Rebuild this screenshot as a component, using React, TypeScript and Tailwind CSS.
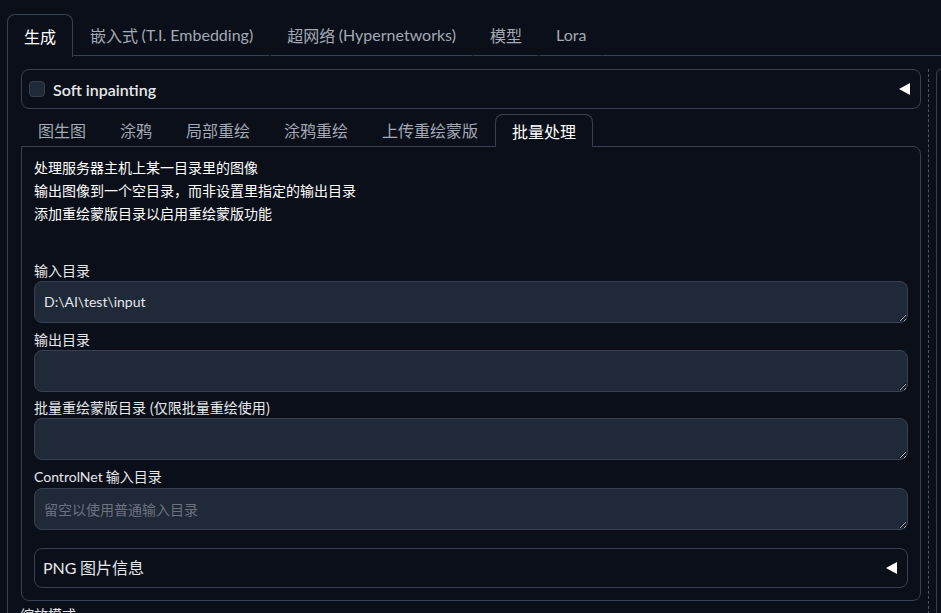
import React from 'react';

const latin = "font-['Lato','Noto_Sans_CJK_SC',sans-serif]";

const topTabs: { zh: string; en?: string }[] = [
  { zh: '生成' },
  { zh: '嵌入式 ', en: '(T.I. Embedding)' },
  { zh: '超网络 ', en: '(Hypernetworks)' },
  { zh: '模型' },
  { zh: '', en: 'Lora' },
];
const subTabs = ['图生图', '涂鸦', '局部重绘', '涂鸦重绘', '上传重绘蒙版', '批量处理'];

const fields = [
  { label: '输入目录', value: 'D:\\AI\\test\\input', placeholder: '' },
  { label: '输出目录', value: '', placeholder: '' },
  { label: '批量重绘蒙版目录 (仅限批量重绘使用)', value: '', placeholder: '' },
  { label: 'ControlNet 输入目录', value: '', placeholder: '留空以使用普通输入目录' },
];

const Caret: React.FC = () => (
  <svg width="11" height="12" viewBox="0 0 11 12" className="shrink-0">
    <path d="M0 6 L11 0 L11 12 Z" fill="#ffffff" />
  </svg>
);

const App: React.FC = () => {
  return (
    <div className="h-[613px] w-[941px] overflow-hidden bg-[#0b0f19] font-['Noto_Sans_CJK_SC','Noto_Sans',sans-serif] text-[#e5e7eb]">
      <div className="pl-[7px] pt-[14px]">
        {/* top tabs */}
        <div className="flex h-[42px]">
          {topTabs.map((t, i) =>
            i === 0 ? (
              <div
                key={t.zh}
                className="relative z-10 -mb-px flex h-[43px] items-center rounded-t-lg border border-b-0 border-[#374151] bg-[#0b0f19] px-4 text-[16px] text-white"
              >
                {t.zh}
              </div>
            ) : (
              <div
                key={t.zh + t.en}
                className="flex items-center whitespace-pre border-b border-[#374151] border-x border-x-transparent px-4 text-[16px] text-[#a3aab5]"
              >
                {t.zh}
                {t.en && <span className={`${latin} pt-px`}>{t.en}</span>}
              </div>
            )
          )}
          <div className="flex-1 border-b border-[#374151]" />
        </div>

        {/* outer panel */}
        <div className="flex border-l border-[#374151] pl-[13px] pt-[13px]">
          <div className="w-[900px] shrink-0">
            {/* soft inpainting */}
            <div className="flex h-[40px] items-center rounded-lg border border-[#374151] pl-[7px] pr-[10px]">
              <span className="h-4 w-4 shrink-0 rounded-[4px] border border-[#374151] bg-[#1f2937]" />
              <span className={`ml-2 flex-1 pt-px text-[16px] font-semibold text-[#e5e7eb] ${latin}`}>Soft inpainting</span>
              <Caret />
            </div>

            {/* sub tabs */}
            <div className="mt-[5px] flex h-[32px]">
              {subTabs.map((t, i) =>
                i === subTabs.length - 1 ? (
                  <div
                    key={t}
                    className="relative z-10 -mb-px flex h-[33px] items-center rounded-t-lg border border-b-0 border-[#374151] bg-[#0b0f19] px-4 text-[16px] text-white"
                  >
                    {t}
                  </div>
                ) : (
                  <div
                    key={t}
                    className="flex items-center border-x border-transparent px-4 text-[16px] text-[#a3aab5]"
                  >
                    {t}
                  </div>
                )
              )}
            </div>

            {/* tab panel */}
            <div className="rounded-b-lg rounded-tr-lg border border-[#374151] px-3 pb-3 pt-[9px]">
              <div className="text-[14px] leading-[23px] text-white">
                <p>处理服务器主机上某一目录里的图像</p>
                <p>输出图像到一个空目录，而非设置里指定的输出目录</p>
                <p>添加重绘蒙版目录以启用重绘蒙版功能</p>
              </div>

              <div className="mt-[36px] flex flex-col gap-[6.67px]">
                {fields.map((f) => (
                  <div key={f.label}>
                    <div className="mb-[2px] text-[14px] leading-[18px] text-[#e5e7eb]">
                      {f.label.startsWith('ControlNet') ? (
                        <>
                          <span className={latin}>ControlNet</span> 输入目录
                        </>
                      ) : (
                        f.label
                      )}
                    </div>
                    <textarea
                      readOnly
                      defaultValue={f.value}
                      placeholder={f.placeholder}
                      className={`block h-[42px] w-full rounded-lg border border-[#374151] bg-[#1f2937] px-[9px] py-[10px] text-[14px] leading-[20px] text-[#e5e7eb] outline-none placeholder:text-[#6b7280] ${f.value ? latin : ''}`}
                    />
                  </div>
                ))}
              </div>

              <div className="mt-[18px] flex h-[40px] items-center rounded-lg border border-[#374151] pl-2 pr-[10px]">
                <span className="flex-1 text-[16px] text-[#e5e7eb]">
                  <span className={latin}>PNG</span> 图片信息
                </span>
                <Caret />
              </div>
            </div>

            <div className="mt-[4px] -ml-px text-[14px] leading-[18px] text-[#e5e7eb]">缩放模式</div>
          </div>

          {/* resize handle */}
          <div className="ml-[7px] w-0 shrink-0 border-l border-dashed border-[#4b5563]" />

          {/* right column edge */}
          <div className="ml-[7px] h-[560px] flex-1 rounded-tl-lg border-l border-t border-[#374151] bg-[#0b0f19]" />
        </div>
      </div>
    </div>
  );
};

export default App;
